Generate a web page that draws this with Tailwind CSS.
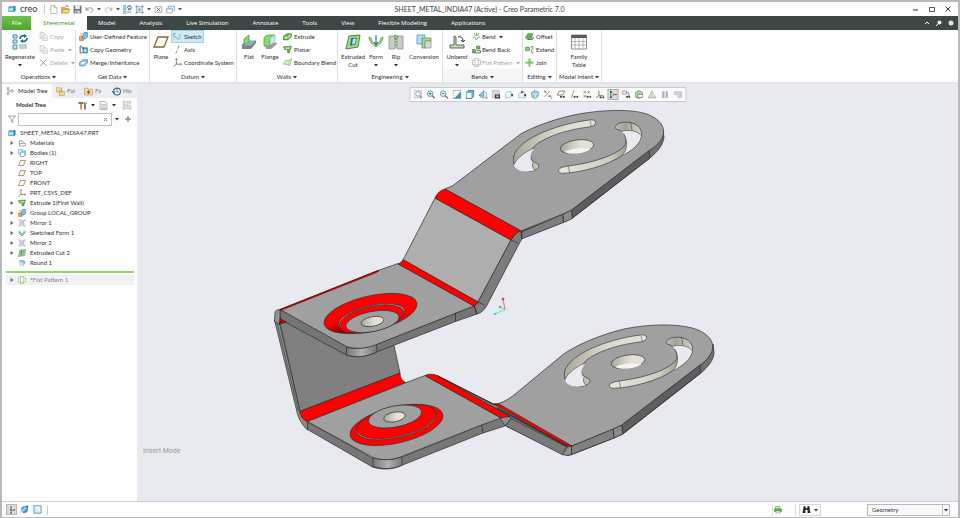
<!DOCTYPE html>
<html lang="en">
<head>
    <meta charset="UTF-8">
    <meta name="viewport" content="width=device-width, initial-scale=1.0">
    <title>SHEET_METAL_INDIA47 (Active) - Creo Parametric 7.0</title>
    <script src="https://cdn.jsdelivr.net/npm/@tailwindcss/browser@4"></script>
</head>
<body class="h-screen flex flex-col overflow-hidden bg-[#fdfdfd] border-2 border-b border-[#b9b9bb] font-['Lato','Open_Sans',sans-serif] text-[6px] leading-[8px] text-[#333]">

    <!-- Icon sprites -->
    <svg class="absolute size-0" xmlns="http://www.w3.org/2000/svg">
        <symbol id="i-cube" viewBox="0 0 16 16"><path d="M1 5 4 2h11v9l-3 3H1z" fill="#1d86a8"/><path d="M2 5.500h9V13H2z" fill="#9fe0f5"/><path d="M3 4.500 5 3h8l-2 1.500z" fill="#c9f0fb"/></symbol>
        <symbol id="i-new" viewBox="0 0 16 16"><path d="M3 1h7l4 4v10H3z" fill="#fff" stroke="#8b9197"/><path d="M10 1v4h4" fill="none" stroke="#8b9197"/></symbol>
        <symbol id="i-open" viewBox="0 0 16 16"><path d="M1 4h5l1 2h6v8H1z" fill="#e8b54a" stroke="#a97c22"/><path d="M4 8h12l-3 6H1z" fill="#fbdc8d" stroke="#a97c22"/><path d="M8 3c2-2 4-2 5 0" fill="none" stroke="#444" stroke-width="1.500"/></symbol>
        <symbol id="i-save" viewBox="0 0 16 16"><path d="M1 1h14v14H1z" fill="#6f7780"/><path d="M4 1h8v6H4z" fill="#f3f5f6"/><path d="M4 10h8v5H4z" fill="#dfe3e6"/><path d="M6 11h2v3H6z" fill="#555"/></symbol>
        <symbol id="i-undo" viewBox="0 0 16 16"><path d="M2 9c3-5 10-5 12-1 0 2-1 4-4 5M2 4v5h5" fill="none" stroke="#80868c" stroke-width="1.600"/></symbol>
        <symbol id="i-redo" viewBox="0 0 16 16"><path d="M14 9C11 4 4 4 2 8c0 2 1 4 4 5M14 4v5H9" fill="none" stroke="#a3a8ad" stroke-width="1.600"/></symbol>
        <symbol id="i-regen" viewBox="0 0 16 16"><path d="M1 1h4v3H1zM1 6h4v3H1zM1 11h4v4H1z" fill="#cdeaf6" stroke="#3b8fb5"/><path d="M7 10h8v5H7z" fill="#c9cdd1"/><path d="M8 5c0-3 3-4 5-3M15 4c0 3-3 4-5 3" fill="none" stroke="#1d6b8c" stroke-width="1.800"/><path d="m12 0 3 2-3 2zM11 5l-3 2 3 2z" fill="#1d6b8c"/></symbol>
        <symbol id="i-windows" viewBox="0 0 16 16"><path d="M4 2h11v8H4z" fill="#e9f6fb" stroke="#3b8fb5"/><path d="M1 6h10v8H1z" fill="#fff" stroke="#6f7780"/><path d="M1 6h10v2H1z" fill="#8ccbe3"/></symbol>
        <symbol id="i-gear" viewBox="0 0 16 16"><path d="M3 3h10v10H3z" fill="#e5f3f8" stroke="#6b7d86"/><path d="M6 6h4v4H6zM1 1h3v3H1zM12 1h3v3h-3zM1 12h3v3H1zM12 12h3v3h-3z" fill="#5f9cb3"/></symbol>
        <symbol id="i-close" viewBox="0 0 16 16"><path d="M2 3h12v10H2z" fill="#fff" stroke="#777"/><path d="m5 5 6 6M11 5l-6 6" stroke="#666" stroke-width="1.500"/></symbol>
        <symbol id="i-copy" viewBox="0 0 16 16"><path d="M2 1h6l2 2v8H2z" fill="#f4f4f4" stroke="#b0b3b6"/><path d="M7 5h5l3 3v7H7z" fill="#fafafa" stroke="#b0b3b6"/><path d="M8 10h5M8 12h5" stroke="#c5c7c9"/></symbol>
        <symbol id="i-delete" viewBox="0 0 16 16"><path d="m2 3 12 11M14 2 2 14" stroke="#8f9397" stroke-width="1.600"/></symbol>
        <symbol id="i-udf" viewBox="0 0 16 16"><path d="M1 8h7v7H1z" fill="#e9a75c" stroke="#a8692b"/><path d="M6 4 9 1h6v8l-3 3H6z" fill="#7fbbe6" stroke="#356f9e"/><path d="M2 2h5v4H2z" fill="#f6cf86"/></symbol>
        <symbol id="i-copygeo" viewBox="0 0 16 16"><path d="M2 2v12M2 14h4M2 2h3" stroke="#444" stroke-width="1.500" fill="none"/><path d="M7 5h8v9H7z" fill="#54a9d8" stroke="#205f87"/><path d="m4 5 4-2v4z" fill="#35741f"/><path d="M9 8h4v4H9z" fill="#d7effa"/></symbol>
        <symbol id="i-merge" viewBox="0 0 16 16"><path d="M1 8 7 3h8v6l-6 5H1z" fill="#8ccbe9" stroke="#2f7095"/><path d="M5 7h7l-4 4H3z" fill="#fff"/></symbol>
        <symbol id="i-plane" viewBox="0 0 16 16"><path d="M5 3h10l-4 10H1z" fill="#fdfaf0" stroke="#80693c" stroke-width="1.300"/></symbol>
        <symbol id="i-sketch" viewBox="0 0 16 16"><path d="M1 3h4M1 3v4M1 11c3-7 5 0 7 1s4 0 4-2" fill="none" stroke="#3aa0bf" stroke-width="1.300"/><path d="M9 6h6M12 3v6" stroke="#6bbcd3"/></symbol>
        <symbol id="i-axis" viewBox="0 0 16 16"><path d="M11 1 9 6M8 8l-.5 1.500M6.500 11 5 15" stroke="#80693c" stroke-width="1.500"/></symbol>
        <symbol id="i-csys" viewBox="0 0 16 16"><path d="M6 1v10h9M6 11l-5 4M4 3l2-2 2 2M13 9l2 2-2 2" fill="none" stroke="#80693c" stroke-width="1.400"/></symbol>
        <symbol id="i-flat" viewBox="0 0 16 16"><path d="m1 11 5-4h9l-5 5H1z" fill="#a9acae" stroke="#6a6e70" stroke-width=".7"/><path d="M1 12h9l5-5v2l-5 6H1z" fill="#7e8284"/><path d="m3 5 5-4v6l-5 4z" fill="#8fd86e" stroke="#4b9632" stroke-width=".8"/><path d="M8 7h5l-4 3H4z" fill="#5bc0de"/></symbol>
        <symbol id="i-flange" viewBox="0 0 16 16"><path d="M2 5c0-3 3-4 6-4h5L8 6v6H2z" fill="#8fd86e" stroke="#5c9d48" stroke-width=".8"/><path d="M8 6c0-2 2-4 5-5v6l-5 5z" fill="#bfe9f5" stroke="#78a7b4" stroke-width=".6"/><path d="m3 12 5-1 6-3 1 2-6 5H4z" fill="#999d9f"/></symbol>
        <symbol id="i-extrude" viewBox="0 0 16 16"><path d="m1 7 6-4h8v5l-6 6H1z" fill="#62b947" stroke="#2d7c24"/><path d="M3 8h5v4H3zM9 7l4-3v3l-4 4z" fill="#c8efb9"/></symbol>
        <symbol id="i-planar" viewBox="0 0 16 16"><path d="m1 3 14-1-4 12-3-1V8H3z" fill="#62b947" stroke="#2d7c24"/><path d="m4 5 8-1-1 3H5z" fill="#c8efb9"/></symbol>
        <symbol id="i-blend" viewBox="0 0 16 16"><path d="M1 11C2 5 5 4 8 4s5-1 7-3c-1 6-1 9-4 13-3-3-6-3-10-3z" fill="#eaf7e4" stroke="#64a850"/><path d="M5 12c0-4 1-6 3-8M11 13c-1-4 0-7 1-9" fill="none" stroke="#64a850"/></symbol>
        <symbol id="i-cut" viewBox="0 0 16 16"><path d="m4 2 11-1-2 12-12 2z" fill="#a5dc8d" stroke="#448b33"/><path d="m6 4 6-.5-1.500 7L5 12z" fill="#2c7386"/><path d="m8 5 3-.5-1 5-3 1z" fill="#c3e9f2"/></symbol>
        <symbol id="i-form" viewBox="0 0 16 16"><path d="M1 3c1 6 3 7 7 10 4-3 6-4 7-10l-2 1c-1 4-3 5-5 6-2-1-4-2-5-6z" fill="#a5e08b" stroke="#52883f" stroke-width=".7"/><path d="M8 1v9M6 8l2 3 2-3" fill="none" stroke="#357bb0" stroke-width="1.200"/></symbol>
        <symbol id="i-rip" viewBox="0 0 16 16"><path d="M1 2h6v13H1zM9 2h6v13H9z" fill="#c9cdca" stroke="#83898a" stroke-width=".7"/><path d="M8 5c-1 0-2-4 0-4s1 4 0 4v9" fill="none" stroke="#48a72f" stroke-width="1.500" stroke-dasharray="2 1"/></symbol>
        <symbol id="i-conv" viewBox="0 0 16 16"><path d="M1 1h8v9H1z" fill="#a9e2f3" stroke="#4294b0" stroke-width=".7"/><path d="M6 4h9v3H9v7H6z" fill="#a5dc8d" stroke="#448b33" stroke-width=".7"/><path d="M9 7h6v7H9z" fill="#d4d7d9" stroke="#8a8e91" stroke-width=".7"/></symbol>
        <symbol id="i-unbend" viewBox="0 0 16 16"><path d="M1 11h4V2l2 1v8h8v3H1z" fill="#b9dfaa" stroke="#55595c" stroke-width=".9"/><path d="M9 3c3-1 5 1 5 4M12 6l2 2 2-2" fill="none" stroke="#333"/></symbol>
        <symbol id="i-bend" viewBox="0 0 16 16"><path d="M1 9h4l3 5 3-5h4M8 1v6M4 2l2 5M12 2l-2 5" fill="none" stroke="#6e8b68" stroke-width="1.400"/></symbol>
        <symbol id="i-bendback" viewBox="0 0 16 16"><path d="M1 8h5v6H1zM8 2h6v5H8z" fill="#6aba53" stroke="#2d6a22"/><path d="M6 14h9v-4H8" fill="none" stroke="#444" stroke-width="1.400"/></symbol>
        <symbol id="i-flatpat" viewBox="0 0 16 16"><path d="M5 1h6v3h4v8h-4v3H5v-3H1V4h4z" fill="#fff" stroke="currentColor" stroke-width="1.300"/><path d="M5 4v8h6V4" fill="none" stroke="currentColor"/></symbol>
        <symbol id="i-offset" viewBox="0 0 16 16"><path d="m1 10 4-7h9l-3 8H1z" fill="#62b947" stroke="#2d7c24"/><path d="M4 13h9l2-4" fill="none" stroke="#333" stroke-width="1.600"/></symbol>
        <symbol id="i-extend" viewBox="0 0 16 16"><path d="M1 4h7v6H1z" fill="#8fcf78" stroke="#3f6d33"/><path d="M10 3h4v5M12 8v6h3" fill="none" stroke="#4d8f3d" stroke-width="1.600"/></symbol>
        <symbol id="i-join" viewBox="0 0 16 16"><path d="M6 1h4v5h5v4h-5v5H6v-5H1V6h5z" fill="#72c15a" stroke="#d5ecd0"/></symbol>
        <symbol id="i-table" viewBox="0 0 16 16"><path d="M.5 1h15v14H.5z" fill="#fff" stroke="#777" stroke-width=".8"/><path d="M.5 1h15v3H.5z" fill="#555b60"/><path d="M.5 7.500h15M.5 11h15M4 4v11M8 4v11M12 4v11" stroke="#9a9ea1" stroke-width=".7"/></symbol>
        <symbol id="i-treetab" viewBox="0 0 16 16"><path d="M4 3v10M4 8h7" stroke="#666"/><circle cx="4" cy="3" r="2" fill="#fff" stroke="#555"/><circle cx="4" cy="13" r="2" fill="#fff" stroke="#555"/><circle cx="12" cy="8" r="2.500" fill="#fff" stroke="#555"/></symbol>
        <symbol id="i-folders" viewBox="0 0 16 16"><path d="M1 1h4l1 1h4v7H1zM6 6h4l1 2h4v7H6z" fill="#f8dd99" stroke="#b98a32"/></symbol>
        <symbol id="i-fav" viewBox="0 0 16 16"><path d="M1 2h5l1 2h8v10H1z" fill="#f8dd99" stroke="#b98a32"/><path d="M8 6v6M5 9h6" stroke="#2e6d93" stroke-width="2"/></symbol>
        <symbol id="i-history" viewBox="0 0 16 16"><circle cx="9" cy="8" r="6" fill="#fff" stroke="#2f6f93" stroke-width="2"/><path d="M9 4v5h3M0 7l3 4 3-4" fill="none" stroke="#1e4f6b" stroke-width="1.500"/></symbol>
        <symbol id="i-tools" viewBox="0 0 16 16"><path d="M1 2h8v3H1z" fill="#555"/><path d="M4 5h3v10H4z" fill="#c98433"/><path d="M11 6h3v9h-3z" fill="#666"/><path d="M10 1v4l2 2 3-2V1l-2 3z" fill="#777"/></symbol>
        <symbol id="i-doc" viewBox="0 0 16 16"><path d="M2 1h9l3 3v11H2z" fill="#fff" stroke="#777"/><path d="M4 6h8M4 8.500h8M4 11h8M4 13h8" stroke="#8b9197"/></symbol>
        <symbol id="i-treefilter" viewBox="0 0 16 16"><path d="M2 2h3v3H2zM2 7h3v3H2zM2 12h3v3H2zM8 2h6v3H8zM8 8h6v6H8z" fill="none" stroke="#a0a4a7"/><path d="m7 7 8 8" stroke="#a0a4a7"/></symbol>
        <symbol id="i-funnel" viewBox="0 0 16 16"><path d="M1 2h14L9.500 8.500V15l-3-2.500v-4z" fill="none" stroke="#5e6468" stroke-width="1.200"/></symbol>
        <symbol id="i-folder" viewBox="0 0 16 16"><path d="M3 13V3h4l1 3h5" fill="none" stroke="#777" stroke-width="1.200"/><path d="M3 14V9h12v5z" fill="#fff" stroke="#777" stroke-width="1.200"/></symbol>
        <symbol id="i-bodies" viewBox="0 0 16 16"><path d="M1 1h8v9H1z" fill="#dff3fa" stroke="#2f8cab"/><path d="m5 7 3-3h7v8l-3 3H5z" fill="#8fd3e8" stroke="#2f8cab"/><path d="M6 8h6v6H6z" fill="#fff"/></symbol>
        <symbol id="i-mirror" viewBox="0 0 16 16"><path d="M1 2h3l2 6-2 6H1M15 2h-3l-2 6 2 6h3" fill="#eeecf6" stroke="#8d84ad" stroke-width="1.200"/><path d="M8 1v14" stroke="#777"/></symbol>
        <symbol id="i-formtree" viewBox="0 0 16 16"><path d="m1 5 7 9 7-9" fill="none" stroke="#4c9f45" stroke-width="2"/><path d="M4 3c0 4 2 6 4 6s4-2 4-6" fill="none" stroke="#3a9bd0" stroke-width="1.500"/></symbol>
        <symbol id="i-round" viewBox="0 0 16 16"><path d="M3 2h7c3 0 5 2 5 5l-5 8V8H3z" fill="#7cc3d4"/><path d="M1 6h8v9H5z" fill="#d7dbdd"/></symbol>
        <symbol id="i-refit" viewBox="0 0 16 16"><path d="M1 1h13v13H1z" fill="#eef2f4" stroke="#9aa3a9"/><circle cx="8" cy="7" r="4" fill="#fff" stroke="#6e8a99" stroke-width="1.300"/><path d="m11 10 4 5" stroke="#6e8a99" stroke-width="1.800"/></symbol>
        <symbol id="i-zoomin" viewBox="0 0 16 16"><circle cx="6.500" cy="6.500" r="5" fill="#e5f6fb" stroke="#4183a0" stroke-width="1.400"/><path d="M4 6.500h5M6.500 4v5" stroke="#275f7c" stroke-width="1.400"/><path d="m10 10 5 5" stroke="#6b5a45" stroke-width="2"/></symbol>
        <symbol id="i-zoomout" viewBox="0 0 16 16"><circle cx="6.500" cy="6.500" r="5" fill="#e5f6fb" stroke="#4183a0" stroke-width="1.400"/><path d="M4 6.500h5" stroke="#275f7c" stroke-width="1.400"/><path d="m10 10 5 5" stroke="#6b5a45" stroke-width="2"/></symbol>
        <symbol id="i-repaint" viewBox="0 0 16 16"><path d="M1 1h14v14H1z" fill="#fff" stroke="#777"/><path d="M15 3v12H2C8 12 9 6 15 3z" fill="#4793b8"/></symbol>
        <symbol id="i-shade" viewBox="0 0 16 16"><path d="m1 5 4-4h10v10l-4 4H1z" fill="#69b6d4" stroke="#2f5f7c" stroke-width="1.300"/><path d="M2 5.500h8.500V14H2z" fill="#e8f7fc"/></symbol>
        <symbol id="i-saved" viewBox="0 0 16 16"><path d="m1 9 8-7v10z" fill="#8fd0e3" stroke="#2f6f93"/><path d="M9 2c5 1 7 7 3 11M1 9c2 4 6 6 10 5" fill="none" stroke="#3687a5" stroke-width="1.300"/><path d="M12 15h4v-4z" fill="#444"/></symbol>
        <symbol id="i-viewmgr" viewBox="0 0 16 16"><path d="M1 1h13v13H1z" fill="#d6d9db" stroke="#a8adb0"/><path d="M6 8h9v7H6z" fill="#333"/><circle cx="10.500" cy="11.500" r="2" fill="#ddd"/></symbol>
        <symbol id="i-box" viewBox="0 0 16 16"><path d="m2 6 3-3h7v8l-3 3H2z" fill="#e8f7fc" stroke="#68aabf"/><path d="M12 7h3v4h-3z" fill="#333"/></symbol>
        <symbol id="i-appear" viewBox="0 0 16 16"><path d="m2 7 5-4h4l3 4v7H2z" fill="#e8f7fc" stroke="#68aabf"/><path d="m7 1 4 3-4 2zM12 7h3v4h-3z" fill="#333"/></symbol>
        <symbol id="i-persp" viewBox="0 0 16 16"><path d="m1 5 7-4 7 3-2 8-5 3-5-2z" fill="#9ad2e5" stroke="#3a87a3"/><path d="m3 6 6 2v6M9 8l5-3" fill="none" stroke="#fff"/></symbol>
        <symbol id="i-datum" viewBox="0 0 16 16"><path d="m2 12 9-10M1 3h4M3 1v4M8 11h6M11 9v4" stroke="#80693c" stroke-width="1.400"/><path d="M13 15h3v-3z" fill="#333"/></symbol>
        <symbol id="i-dplane" viewBox="0 0 16 16"><path d="M5 2h10l-4 7H1z" fill="none" stroke="#80693c" stroke-width="1.400"/><circle cx="8" cy="12" r="2" fill="#444"/><circle cx="13" cy="12" r="2" fill="#444"/></symbol>
        <symbol id="i-daxis" viewBox="0 0 16 16"><path d="M8 1 3 15" stroke="#80693c" stroke-width="1.500" stroke-dasharray="5 1.500"/><circle cx="9" cy="12" r="2" fill="#444"/><circle cx="14" cy="12" r="2" fill="#444"/></symbol>
        <symbol id="i-dpoint" viewBox="0 0 16 16"><path d="m2 2 4 4M6 2 2 6M9 2l4 4M13 2 9 6M2 9l4 4M6 9l-4 4" stroke="#80693c" stroke-width="1.300"/><circle cx="9" cy="12" r="2" fill="#444"/><circle cx="14" cy="12" r="2" fill="#444"/></symbol>
        <symbol id="i-dcsys" viewBox="0 0 16 16"><path d="M6 1v9h8M6 10l-5 4" fill="none" stroke="#80693c" stroke-width="1.500"/><circle cx="9" cy="13" r="2" fill="#444"/><circle cx="14" cy="13" r="2" fill="#444"/></symbol>
        <symbol id="i-spin" viewBox="0 0 16 16"><path d="M4 2v12" stroke="#3f9a41" stroke-width="2"/><path d="m4 3 6 5" stroke="#3f9a41" stroke-width="1.500"/><path d="m4 13 6-5" stroke="#3a9bd0" stroke-width="1.500"/><path d="M9 8h6" stroke="#c33" stroke-width="2"/><circle cx="4" cy="3" r="1.500" fill="#333"/><circle cx="4" cy="13" r="1.500" fill="#333"/></symbol>
        <symbol id="i-annot" viewBox="0 0 16 16"><path d="M1 2h8v5H1zM9 5h4v6" fill="#fff" stroke="#666" stroke-width="1.200"/><circle cx="10" cy="12" r="2" fill="#444"/><circle cx="14" cy="12" r="2" fill="#444"/></symbol>
        <symbol id="i-sim" viewBox="0 0 16 16"><path d="m1 5 6-4 7 3v8l-6 3-6-2z" fill="#a5d796" stroke="#4c8c3f"/><path d="M6 8h9v5H6z" fill="#fff" stroke="#555"/></symbol>
        <symbol id="i-tri" viewBox="0 0 16 16"><path d="m8 2 7 12H1zM8 2v8l7 4M8 10l-7 4" fill="#e3e3e3" stroke="#a0a0a0"/></symbol>
        <symbol id="i-pause" viewBox="0 0 16 16"><path d="M3 2h4v12H3zM9 2h4v12H9z" fill="#b0b0b2"/></symbol>
        <symbol id="i-exit" viewBox="0 0 16 16"><path d="M1 3h14v10H8V8H1z" fill="#d2d2d4" stroke="#b5b5b7"/></symbol>
        <symbol id="i-navtree" viewBox="0 0 16 16"><path d="M6 2v12M6 8h6" stroke="#777" stroke-width="1.500"/><path d="M4 1h4v3H4zM4 6h4v4H4zM4 12h4v3H4zM11 6h3v4h-3z" fill="#777"/></symbol>
        <symbol id="i-browser" viewBox="0 0 16 16"><circle cx="8" cy="8" r="6" fill="#2b90cc"/><path d="M1 13C3 6 9 2 15 3c-3 0-5 8-10 9z" fill="#8fd0f0"/><path d="m10 2 5-1-2 5z" fill="#1d5c8c"/></symbol>
        <symbol id="i-panel" viewBox="0 0 16 16"><path d="M1.500 1.500h13v13h-13z" fill="#d4ecf6" stroke="#407f9f" stroke-width="1.300"/><path d="M3 3h9v9z" fill="#f6fcff"/></symbol>
        <symbol id="i-status" viewBox="0 0 16 16"><path d="M3 1h9v5H3z" fill="#c9efc0" stroke="#418d35"/><path d="M1 6h14v5H1z" fill="#62b947" stroke="#2d7c24"/><path d="M4 10h8v4H4z" fill="#fff" stroke="#418d35"/></symbol>
        <symbol id="i-find" viewBox="0 0 16 16"><path d="M3 2h3l1 4h2l1-4h3l2 12h-5V9H6v5H1z" fill="#222"/><path d="M3 10h2M11 10h2" stroke="#999"/></symbol>
        <symbol id="i-down" viewBox="0 0 8 8"><path d="M0 2h8L4 7z" fill="currentColor"/></symbol>
        <symbol id="i-right" viewBox="0 0 8 8"><path d="M1 0v8l6-4z" fill="#666"/></symbol>

        <!-- Slots and centre hole shared by both arms -->
        <linearGradient id="wall" x1="0" y1="0" x2="1" y2="0"><stop offset="0" stop-color="#a9a899"/><stop offset=".5" stop-color="#dad8ca"/><stop offset="1" stop-color="#e6e4d8"/></linearGradient>
        <linearGradient id="wall2" x1="0" y1="0" x2="1" y2="0"><stop offset="0" stop-color="#eae8dc"/><stop offset=".6" stop-color="#cfcdbf"/><stop offset=".8" stop-color="#a3a295"/><stop offset="1" stop-color="#d8d6c8"/></linearGradient>
        <linearGradient id="hole" x1="0" y1="0" x2="1" y2="0"><stop offset="0" stop-color="#a9a899"/><stop offset=".6" stop-color="#e4e2d6"/></linearGradient>
        <linearGradient id="side" x1="0" y1="0" x2="1" y2="0"><stop offset="0" stop-color="#787878"/><stop offset=".5" stop-color="#b0b0b0"/><stop offset="1" stop-color="#777"/></linearGradient>
        <radialGradient id="dish" cx=".18" cy=".8" r=".3"><stop offset="0" stop-color="#8c0000"/><stop offset="1" stop-color="#f00"/></radialGradient>
        <symbol id="slots" viewBox="0 0 750 450">
            <g stroke="#333" stroke-width="2" stroke-linejoin="round">
                <path d="M478 60C380 72 245 122 250 182c2 26 28 34 50 32 24-2 30-14 25-21-8-6-20-6-23-22-3-22 10-34 28-45 40-24 90-38 153-46 20-6 19-24-5-20z" fill="url(#wall)"/>
                <path d="M252 196c6-20 34-42 64-53-16 14-18 32-9 47-4 6 0 14 6 21-26 9-55 3-61-15z" fill="#e8eaef" stroke="none"/>
                <path d="m480 62 4 18M252 194c8-20 34-40 64-51M307 190c0 8 2 14 8 20" fill="none" stroke-width="1.500"/>
                <path d="M415 198c-34 4-36 18-20 22 56-1 140-24 180-53 30-13 60-38 60-66-2-28-34-39-62-33-18 5-22 17-12 20 20 5 29 22 27 40-8 28-80 58-173 70z" fill="url(#wall2)"/>
                <path d="M574 94c10-3 22-3 31-2 12 3 22 8 28 14-2 24-26 44-56 60 16-16 17-42 7-60z" fill="#e8eaef" stroke="none"/>
                <path d="M574 94c12-4 44-6 59 12M577 166c18-20 14-48 4-64M602 67l4 24M415 199l4 19" fill="none" stroke-width="1.500"/>
                <ellipse cx="441" cy="140" rx="51" ry="20" transform="rotate(-8 441 140)" fill="url(#hole)"/>
                <path d="M402 156c20-12 50-14 80-9-14 13-56 20-80 9z" fill="#f4f4f2" stroke="none"/>
            </g>
        </symbol>
    </svg>

    <!-- Title bar -->
    <header class="h-3.5 shrink-0 flex items-center px-1.5">
        <div class="flex-1 flex items-center">
            <svg class="size-2"><use href="#i-cube"/></svg>
            <span class="ml-1 w-5 text-[9px] leading-[10px] text-[#333]">creo</span>
            <span class="ml-1 h-2.5 w-px bg-[#ccc]"></span>
            <div class="flex items-center gap-[3px] ml-1 text-[#555]">
                <button aria-label="New"><svg class="size-[9px]"><use href="#i-new"/></svg></button>
                <button aria-label="Open"><svg class="size-[9px]"><use href="#i-open"/></svg></button>
                <button aria-label="Save"><svg class="size-[9px]"><use href="#i-save"/></svg></button>
                <button aria-label="Undo"><svg class="size-[9px]"><use href="#i-undo"/></svg></button>
                <button aria-label="Undo list"><svg class="size-1"><use href="#i-down"/></svg></button>
                <button aria-label="Redo"><svg class="size-[9px]"><use href="#i-redo"/></svg></button>
                <button aria-label="Redo list"><svg class="size-1"><use href="#i-down"/></svg></button>
                <button aria-label="Regenerate"><svg class="size-[9px]"><use href="#i-regen"/></svg></button>
                <button aria-label="Settings"><svg class="size-[9px]"><use href="#i-gear"/></svg></button>
                <button aria-label="Settings list"><svg class="size-1"><use href="#i-down"/></svg></button>
                <button aria-label="Close window"><svg class="size-[9px]"><use href="#i-close"/></svg></button>
                <button aria-label="Windows"><svg class="size-[9px]"><use href="#i-windows"/></svg></button>
                <button aria-label="Customize"><svg class="size-1"><use href="#i-down"/></svg></button>
            </div>
        </div>
        <h1 class="text-[7px] whitespace-nowrap text-[#444]">SHEET_METAL_INDIA47 (Active) - Creo Parametric 7.0</h1>
        <div class="flex-1 flex justify-end items-center gap-2.5 pr-px">
            <button aria-label="Minimize"><svg class="size-1.5" viewBox="0 0 6 6"><path d="M0 4h5" stroke="#333"/></svg></button>
            <button aria-label="Restore"><svg class="size-1.5" viewBox="0 0 6 6"><path d="M.5 1.500h5v4h-5z" fill="none" stroke="#555"/></svg></button>
            <button aria-label="Close"><svg class="size-1.5" viewBox="0 0 6 6"><path d="m.5.5 5 5m0-5-5 5" stroke="#333"/></svg></button>
        </div>
    </header>

    <!-- Ribbon tabs -->
    <nav class="h-3.5 shrink-0 flex items-stretch bg-[#3c4746] text-white font-['Open_Sans']">
        <button class="w-[29px] bg-linear-to-b from-[#6cc24a] to-[#4ea42f]">File</button>
        <button class="w-14 bg-[#fdfdfd] text-[#3f8f22]">Sheetmetal</button>
        <div class="flex-1 flex items-center gap-6 px-[11px] whitespace-nowrap">
            <button>Model</button>
            <button>Analysis</button>
            <button>Live Simulation</button>
            <button>Annotate</button>
            <button>Tools</button>
            <button>View</button>
            <button>Flexible Modeling</button>
            <button>Applications</button>
        </div>
        <div class="flex items-center gap-1.5 pr-1">
            <button aria-label="Collapse ribbon"><svg class="size-1.5" viewBox="0 0 6 6"><path d="m1 4 2-2 2 2" fill="none" stroke="#fff"/></svg></button>
            <button aria-label="Search"><svg class="size-1.5" viewBox="0 0 6 6"><circle cx="3.500" cy="2.500" r="2" fill="#fff"/><path d="M0 6l2-2" stroke="#fff"/></svg></button>
            <button aria-label="Learn"><svg class="size-1.5" viewBox="0 0 6 6"><circle cx="3" cy="3" r="2.500" fill="#dfe3e3"/></svg></button>
        </div>
    </nav>

    <!-- Ribbon -->
    <section class="h-[54px] shrink-0 flex border-b-2 border-[#e4e6e9] whitespace-nowrap">
        <div class="w-[74px] flex flex-col border-r border-[#dcdee0]">
            <div class="flex h-[39px] pl-[3px] gap-1">
                <button class="w-[30px] flex flex-col items-center"><span class="h-[23px] shrink-0 flex items-center"><svg class="size-4"><use href="#i-regen"/></svg></span>Regenerate<svg class="size-1 mt-0.5"><use href="#i-down"/></svg></button>
                <div class="grid grid-rows-3 text-[#aaa]">
                    <button class="flex items-center gap-0.5"><svg class="size-[9px]"><use href="#i-copy"/></svg>Copy</button>
                    <button class="flex items-center gap-0.5"><svg class="size-[9px]"><use href="#i-copy"/></svg>Paste<svg class="size-1 ml-0.5"><use href="#i-down"/></svg></button>
                    <button class="flex items-center gap-0.5"><svg class="size-[9px]"><use href="#i-delete"/></svg>Delete<svg class="size-1 ml-0.5"><use href="#i-down"/></svg></button>
                </div>
            </div>
            <button class="flex-1 flex items-center justify-center gap-0.5 pt-0.5">Operations<svg class="size-1"><use href="#i-down"/></svg></button>
        </div>
        <div class="w-[74px] flex flex-col border-r border-[#dcdee0]">
            <div class="grid grid-rows-3 justify-start h-[39px] pl-[3px]">
                <button class="flex items-center gap-0.5"><svg class="size-[9px]"><use href="#i-udf"/></svg>User-Defined Feature</button>
                <button class="flex items-center gap-0.5"><svg class="size-[9px]"><use href="#i-copygeo"/></svg>Copy Geometry</button>
                <button class="flex items-center gap-0.5"><svg class="size-[9px]"><use href="#i-merge"/></svg>Merge/Inheritance</button>
            </div>
            <button class="flex-1 flex items-center justify-center gap-0.5 pt-0.5">Get Data<svg class="size-1"><use href="#i-down"/></svg></button>
        </div>
        <div class="w-[87px] flex flex-col border-r border-[#dcdee0]">
            <div class="flex h-[39px] pl-0.5 gap-px">
                <button class="w-[18px] flex flex-col items-center"><span class="h-[23px] shrink-0 flex items-center"><svg class="size-4"><use href="#i-plane"/></svg></span>Plane</button>
                <div class="grid grid-rows-3 justify-items-start">
                    <button class="flex items-center gap-0.5 px-0.5 bg-[#cdeaf5] outline outline-[#9fd3e6] -outline-offset-1"><svg class="size-[9px]"><use href="#i-sketch"/></svg>Sketch</button>
                    <button class="flex items-center gap-0.5 px-0.5"><svg class="size-[9px]"><use href="#i-axis"/></svg>Axis</button>
                    <button class="flex items-center gap-0.5 px-0.5"><svg class="size-[9px]"><use href="#i-csys"/></svg>Coordinate System</button>
                </div>
            </div>
            <button class="flex-1 flex items-center justify-center gap-0.5 pt-0.5">Datum<svg class="size-1"><use href="#i-down"/></svg></button>
        </div>
        <div class="w-[101px] flex flex-col border-r border-[#dcdee0]">
            <div class="flex h-[39px] pl-0.5 gap-px">
                <button class="w-5 flex flex-col items-center"><span class="h-[23px] shrink-0 flex items-center"><svg class="size-4"><use href="#i-flat"/></svg></span>Flat</button>
                <button class="w-5 flex flex-col items-center"><span class="h-[23px] shrink-0 flex items-center"><svg class="size-4"><use href="#i-flange"/></svg></span>Flange</button>
                <div class="grid grid-rows-3 pl-0.5">
                    <button class="flex items-center gap-0.5"><svg class="size-[9px]"><use href="#i-extrude"/></svg>Extrude</button>
                    <button class="flex items-center gap-0.5"><svg class="size-[9px]"><use href="#i-planar"/></svg>Planar</button>
                    <button class="flex items-center gap-0.5"><svg class="size-[9px]"><use href="#i-blend"/></svg>Boundary Blend</button>
                </div>
            </div>
            <button class="flex-1 flex items-center justify-center gap-0.5 pt-0.5">Walls<svg class="size-1"><use href="#i-down"/></svg></button>
        </div>
        <div class="w-[105px] flex flex-col border-r border-[#dcdee0]">
            <div class="flex h-[39px] pl-0.5">
                <button class="w-[26px] flex flex-col items-center"><span class="h-[23px] shrink-0 flex items-center"><svg class="size-4"><use href="#i-cut"/></svg></span>Extruded<br>Cut</button>
                <button class="w-5 flex flex-col items-center"><span class="h-[23px] shrink-0 flex items-center"><svg class="size-4"><use href="#i-form"/></svg></span>Form<svg class="size-1 mt-0.5"><use href="#i-down"/></svg></button>
                <button class="w-5 flex flex-col items-center"><span class="h-[23px] shrink-0 flex items-center"><svg class="size-4"><use href="#i-rip"/></svg></span>Rip<svg class="size-1 mt-0.5"><use href="#i-down"/></svg></button>
                <button class="flex-1 flex flex-col items-center"><span class="h-[23px] shrink-0 flex items-center"><svg class="size-4"><use href="#i-conv"/></svg></span>Conversion</button>
            </div>
            <button class="flex-1 flex items-center justify-center gap-0.5 pt-0.5">Engineering<svg class="size-1"><use href="#i-down"/></svg></button>
        </div>
        <div class="w-20 flex flex-col border-r border-[#dcdee0]">
            <div class="flex h-[39px] pl-0.5 gap-[3px]">
                <button class="w-6 flex flex-col items-center"><span class="h-[23px] shrink-0 flex items-center"><svg class="size-4"><use href="#i-unbend"/></svg></span>Unbend<svg class="size-1 mt-0.5"><use href="#i-down"/></svg></button>
                <div class="grid grid-rows-3">
                    <button class="flex items-center gap-px"><svg class="size-[9px]"><use href="#i-bend"/></svg>Bend<svg class="size-1 ml-0.5"><use href="#i-down"/></svg></button>
                    <button class="flex items-center gap-px"><svg class="size-[9px]"><use href="#i-bendback"/></svg>Bend Back</button>
                    <button class="flex items-center gap-px text-[#aaa]"><svg class="size-[9px]"><use href="#i-flatpat"/></svg>Flat Pattern<svg class="size-1 ml-0.5"><use href="#i-down"/></svg></button>
                </div>
            </div>
            <button class="flex-1 flex items-center justify-center gap-0.5 pt-0.5 bg-[#f5f6f7]">Bends<svg class="size-1"><use href="#i-down"/></svg></button>
        </div>
        <div class="w-[34px] flex flex-col border-r border-[#dcdee0]">
            <div class="grid grid-rows-3 justify-start h-[39px] pl-0.5">
                <button class="flex items-center gap-0.5"><svg class="size-[9px]"><use href="#i-offset"/></svg>Offset</button>
                <button class="flex items-center gap-0.5"><svg class="size-[9px]"><use href="#i-extend"/></svg>Extend</button>
                <button class="flex items-center gap-0.5"><svg class="size-[9px]"><use href="#i-join"/></svg>Join</button>
            </div>
            <button class="flex-1 flex items-center justify-center gap-0.5 pt-0.5">Editing<svg class="size-1"><use href="#i-down"/></svg></button>
        </div>
        <div class="w-[45px] flex flex-col border-r border-[#dcdee0]">
            <button class="h-[39px] flex flex-col items-center"><span class="h-[23px] shrink-0 flex items-center"><svg class="size-4"><use href="#i-table"/></svg></span>Family<br>Table</button>
            <button class="flex-1 flex items-center justify-center gap-0.5 pt-0.5">Model Intent<svg class="size-1"><use href="#i-down"/></svg></button>
        </div>
    </section>

    <main class="flex-1 min-h-0 flex">
        <!-- Navigator -->
        <aside class="w-[135px] shrink-0 flex flex-col bg-[#fdfdfd]">
            <div class="h-3.5 flex bg-[#eceef1] text-[#777]">
                <button class="w-[50px] flex items-center gap-1 pl-1 whitespace-nowrap bg-[#fdfdfd] text-[#333]"><svg class="size-2"><use href="#i-treetab"/></svg>Model Tree</button>
                <button class="w-7 flex items-center gap-0.5 pl-1"><svg class="size-[9px]"><use href="#i-folders"/></svg>Fol</button>
                <button class="w-7 flex items-center gap-0.5 pl-1"><svg class="size-[9px]"><use href="#i-fav"/></svg>Fa</button>
                <button class="w-7 flex items-center gap-0.5 pl-1"><svg class="size-[9px]"><use href="#i-history"/></svg>His</button>
            </div>
            <div class="h-3.5 flex items-center pl-3.5 pr-[5px] text-[#333]">
                <h2 class="flex-1 font-bold">Model Tree</h2>
                <button class="flex items-center gap-1" aria-label="Settings"><svg class="size-[9px]"><use href="#i-tools"/></svg><svg class="size-1"><use href="#i-down"/></svg></button>
                <button class="flex items-center gap-1 ml-1" aria-label="Show"><svg class="size-[9px]"><use href="#i-doc"/></svg><svg class="size-1"><use href="#i-down"/></svg></button>
                <button class="ml-1.5" aria-label="Tree filters"><svg class="size-[10px]"><use href="#i-treefilter"/></svg></button>
            </div>
            <div class="h-3.5 flex items-center pl-1.5 pr-1">
                <label for="treeSearch" aria-label="Filter tree"><svg class="size-2 mr-0.5"><use href="#i-funnel"/></svg></label>
                <div class="relative flex-1">
                    <input id="treeSearch" type="text" class="block w-full h-[13px] border border-[#bfc3c6] bg-white px-1">
                    <button class="absolute right-1 top-1" aria-label="Clear"><svg class="size-[5px]" viewBox="0 0 6 6"><path d="m1 1 4 4m0-4-4 4" stroke="#777"/></svg></button>
                </div>
                <button class="ml-[3px]" aria-label="Search options"><svg class="size-1"><use href="#i-down"/></svg></button>
                <button class="ml-1.5 mr-0.5" aria-label="Add"><svg class="size-1.5" viewBox="0 0 6 6"><path d="M3 0v6M0 3h6" stroke="#666"/></svg></button>
            </div>
            <ul class="pt-0.5 leading-[10px]">
                <li class="flex items-center h-2.5 gap-1 pl-1.5"><svg class="size-2"><use href="#i-cube"/></svg>SHEET_METAL_INDIA47.PRT</li>
                <li class="flex items-center h-2.5 gap-1 pl-2"><svg class="size-1"><use href="#i-right"/></svg><svg class="size-2"><use href="#i-folder"/></svg>Materials</li>
                <li class="flex items-center h-2.5 gap-1 pl-2"><svg class="size-1"><use href="#i-right"/></svg><svg class="size-2"><use href="#i-bodies"/></svg>Bodies (1)</li>
                <li class="flex items-center h-2.5 gap-1 pl-4"><svg class="size-2"><use href="#i-plane"/></svg>RIGHT</li>
                <li class="flex items-center h-2.5 gap-1 pl-4"><svg class="size-2"><use href="#i-plane"/></svg>TOP</li>
                <li class="flex items-center h-2.5 gap-1 pl-4"><svg class="size-2"><use href="#i-plane"/></svg>FRONT</li>
                <li class="flex items-center h-2.5 gap-1 pl-4"><svg class="size-2"><use href="#i-csys"/></svg>PRT_CSYS_DEF</li>
                <li class="flex items-center h-2.5 gap-1 pl-2"><svg class="size-1"><use href="#i-right"/></svg><svg class="size-2"><use href="#i-planar"/></svg>Extrude 1(First Wall)</li>
                <li class="flex items-center h-2.5 gap-1 pl-2"><svg class="size-1"><use href="#i-right"/></svg><svg class="size-2"><use href="#i-udf"/></svg>Group LOCAL_GROUP</li>
                <li class="flex items-center h-2.5 gap-1 pl-2"><svg class="size-1"><use href="#i-right"/></svg><svg class="size-2"><use href="#i-mirror"/></svg>Mirror 1</li>
                <li class="flex items-center h-2.5 gap-1 pl-2"><svg class="size-1"><use href="#i-right"/></svg><svg class="size-2"><use href="#i-formtree"/></svg>Sketched Form 1</li>
                <li class="flex items-center h-2.5 gap-1 pl-2"><svg class="size-1"><use href="#i-right"/></svg><svg class="size-2"><use href="#i-mirror"/></svg>Mirror 2</li>
                <li class="flex items-center h-2.5 gap-1 pl-2"><svg class="size-1"><use href="#i-right"/></svg><svg class="size-2"><use href="#i-cut"/></svg>Extruded Cut 2</li>
                <li class="flex items-center h-2.5 gap-1 pl-4"><svg class="size-2"><use href="#i-round"/></svg>Round 1</li>
                <li class="mt-[3px] mb-0.5 ml-1 mr-[3px] h-0.5 bg-[#8bd873]"></li>
                <li class="flex items-center h-2.5 gap-1 ml-1 mr-[3px] pl-1 bg-[#f0f1f2] text-[#888]"><svg class="size-1"><use href="#i-right"/></svg><svg class="size-2 text-[#7fb56c]"><use href="#i-flatpat"/></svg><span><span class="text-[#222]">*</span>Flat Pattern 1</span></li>
            </ul>
        </aside>

        <!-- Graphics area -->
        <section class="relative flex-1 min-w-0 bg-[#e8eaef]">
            <svg class="block w-full h-full" viewBox="137 84 821 417" preserveAspectRatio="xMidYMid slice">
                <g stroke="#2b2b2b" stroke-width=".7" stroke-linejoin="round">
                    <!-- upper arm -->
                    <path d="M649 150C656 145 662 139 663 130l1 7c-1 9-7 15-14 21l-77.500 60-9 4-42 16-5 5-5-3 10-9 42.500-16 8-5z" fill="#707070"/>
                    <path d="M571.500 210l1 8 77.500-60-1-8z" fill="#5e5e5e"/>
                    <path d="M521.500 232v7l42-16.500-.5-8.500z" fill="#7d7d7d"/>
                    <path d="M563 214l.5 8.500 9-4-1-8.500z" fill="#8a8a8a"/>
                    <path d="M445 189c3-2 5-1.500 8-3.500l67-51C532 127 560 117 582 113.500c30-5 60-4 71 3.500 11 6 13 15 8 23-3 4-6 7-12 10.500L571.500 210l-8.500 4-42 17z" fill="#a0a0a0"/>
                    <!-- slanted web -->
                    <path d="M435 198 403 260l75 42 33-62z" fill="#aeaeae"/>
                    <path d="M511 240 478 302c-1 2-2 3-4 4l3 8c4-1 7-4 9-7l33-63c1-2 2-4 3-5v-7l-2-1c-4 2-7 5-9 9z" fill="#7c7c7c"/>
                    <path d="M511 240l7 3M520.500 231l1.500 8M478 302l6.500 3" fill="none"/>
                    <path d="M445 189 520.500 230.500c-4 2-7 5-9.500 9.500L435 198c2-5 6-8 10-9z" fill="#f00"/>
                    <!-- back wall -->
                    <path d="M279 318 300 411.500 400 373l-7-32-60-30z" fill="#808080"/>
                    <path d="M274.500 320 296.500 410c1 6 5 15 11 20v-8c-4-2-6-6-7.500-10.500L279 321z" fill="#8c8c8c"/>
                    <path d="M276.500 321 298.500 411" fill="none" stroke-width=".5"/>
                    <path d="M299.500 411.500 400 373c0 4 2 8 5.500 9.500L307.500 422c-4-2-7-6-8-10.500z" fill="#f00"/>
                    <!-- upper base -->
                    <path d="M280 309.500v10L346.500 355c9 3 20 2 30-3l79-30.500L477 314l-3-8-97 38-20 3z" fill="#757575"/>
                    <path d="M346.500 347v8c9 3 20 2 30.500-3l-.5-8c-9 4-22 6-30 3z" fill="url(#side)"/>
                    <path d="M280 309.500 378 270.500l20-7 76 42.500-18 7-79.500 31.500c-9 4-21 5-30 2z" fill="#a0a0a0"/>
                    <path d="M280 309.500 378 270.500l.5 1L281.500 310z" fill="#d00000" stroke="#7c0000"/>
                    <path d="M280 309.500c-4 0-5.500 2-5 4l-.5 8 5 3 .5-5z" fill="#949494"/>
                    <path d="M280 318.500 286.500 322l-7 2z" fill="#c00000"/>
                    <path d="M455.500 313v8.500M474 306l3 8" fill="none"/>
                    <path d="M403 259.500 478 302c-1 2-2 3-4 4l-76-42c2-1 4-2 5-4.500z" fill="#f00"/>
                    <!-- lower right arm -->
                    <path d="M700 365c8-5 12-12 13-21l1 8c0 8-6 15-13 21l-78 61-9 4-42 16.500-4 1-5-2-56-27 2-9 60 30 4-2 42-16 8-4z" fill="#707070"/>
                    <path d="M621.500 425l1 9 78-61-.5-8z" fill="#5e5e5e"/>
                    <path d="M613 429l1 9 9-4-1.500-9z" fill="#8a8a8a"/>
                    <path d="M571.500 446v8.500l42.500-16.500-1-9z" fill="#808080"/>
                    <path d="M437 375.500 494 404l73 43-57-28z" fill="#777" stroke="none"/>
                    <path d="M511 418.500 567 447l-4 8-57-29-5-8z" fill="#7a7a7a"/>
                    <path d="M567 447l4.500-1v8.500l-4.500 1-4.500-1z" fill="#8f8f8f"/>
                    <path d="M494 404c6 0 12-3 20-9l46-38C572 347 596 336 624 329c30-6 60-5 74 1 14 6 18 16 12 25-2 4-6 7-10 10l-78.500 60-8.500 4-41.500 17z" fill="#a0a0a0"/>
                    <path d="M494 404h5l73 42h-6z" fill="#f00"/>
                    <!-- lower base -->
                    <path d="M307.500 421.500v8L372.500 467c9 3 20 3 30-2L483 433l22-7 6-8-10-1-99 40-30 1z" fill="#777"/>
                    <path d="M373 457.500v9c9 3 20 3 29.500-1.500l-1-8.500c-9 4-20 4-28.500 1z" fill="url(#side)"/>
                    <path d="M307.500 421.500 405 383l20-7.500 76 42.500-19.500 7-80 31.500c-9 4-20 4-28.500 1z" fill="#a0a0a0"/>
                    <path d="M481.500 425l1.500 8M501 418l4.500 8" fill="none"/>
                    <path d="M500 418c4-2 9-3 11 .5l-6 7.500z" fill="#8f8f8f"/>
                    <path d="M425 375.500c4-2 8-1.500 12 0l73 41c-3 0-6 1-9 1.500z" fill="#f00"/>
                    <path d="M437 375.500 494 404.500M497 408 567 446" fill="none" stroke-width="1.200"/>
                </g>
                <use href="#slots" x="430" y="100" width="250" height="150"/>
                <use href="#slots" x="481" y="315" width="250" height="150"/>

                <!-- upper dimple -->
                <g stroke="#333" stroke-width=".7">
                    <ellipse cx="370.500" cy="313.500" rx="47.500" ry="17.500" transform="rotate(-13 370.500 313.500)" fill="url(#dish)"/>
                    <ellipse cx="371.500" cy="318" rx="34" ry="12.500" transform="rotate(-13 371.500 318)" fill="#b5b5b5"/>
                    <ellipse cx="371.500" cy="319" rx="33" ry="12.500" transform="rotate(-13 371.500 319)" fill="#f00"/>
                    <ellipse cx="372.500" cy="321.500" rx="27" ry="10" transform="rotate(-11 372.500 321.500)" fill="#a0a0a0"/>
                    <ellipse cx="372.500" cy="321.500" rx="11.500" ry="4.800" transform="rotate(-11 372.500 321.500)" fill="url(#hole)"/>
                </g>
                <!-- lower dimple -->
                <g stroke="#333" stroke-width=".7">
                    <ellipse cx="396.500" cy="425" rx="47.500" ry="18" transform="rotate(-13 396.500 425)" fill="#f00"/>
                    <ellipse cx="396.500" cy="422.500" rx="41" ry="15" transform="rotate(-13 396.500 422.500)" fill="#c9c9c9"/>
                    <ellipse cx="396.500" cy="421.500" rx="40.500" ry="15" transform="rotate(-13 396.500 421.500)" fill="#f00"/>
                    <ellipse cx="395" cy="416.500" rx="27" ry="10.500" transform="rotate(-11 395 416.500)" fill="#a0a0a0"/>
                    <ellipse cx="394.500" cy="417" rx="11" ry="4.800" transform="rotate(-11 394.500 417)" fill="url(#hole)"/>
                </g>
                <!-- spin centre -->
                <path d="M505 309.500 503 299" stroke="#e44" stroke-width=".8"/>
                <path d="M505 309.500 495 314" stroke="#3dd" stroke-width=".8"/>
                <path d="M505 309.500 500 307" stroke="#4c4" stroke-width=".8"/>
                <circle cx="503" cy="299" r="1.300" fill="#e33"/>
                <circle cx="495" cy="314" r="1.300" fill="#3de"/>
                <circle cx="500" cy="307" r="1.200" fill="#3c5"/>
            </svg>

            <!-- In-graphics toolbar -->
            <div class="absolute top-[3px] left-1/2 -translate-x-1/2 h-[15px] flex items-center gap-1 px-[3px] bg-[#fbfbfc] border border-[#c9cccf]">
                <button aria-label="Refit"><svg class="size-[9px]"><use href="#i-refit"/></svg></button>
                <button aria-label="Zoom in"><svg class="size-[9px]"><use href="#i-zoomin"/></svg></button>
                <button aria-label="Zoom out"><svg class="size-[9px]"><use href="#i-zoomout"/></svg></button>
                <button aria-label="Repaint"><svg class="size-[9px]"><use href="#i-repaint"/></svg></button>
                <button aria-label="Display style"><svg class="size-[9px]"><use href="#i-shade"/></svg></button>
                <button aria-label="Saved orientations"><svg class="size-[9px]"><use href="#i-saved"/></svg></button>
                <button aria-label="View manager"><svg class="size-[9px]"><use href="#i-viewmgr"/></svg></button>
                <button aria-label="Section"><svg class="size-[9px]"><use href="#i-box"/></svg></button>
                <button aria-label="Appearance"><svg class="size-[9px]"><use href="#i-appear"/></svg></button>
                <button aria-label="Perspective"><svg class="size-[9px]"><use href="#i-persp"/></svg></button>
                <button aria-label="Datum display"><svg class="size-[9px]"><use href="#i-datum"/></svg></button>
                <button aria-label="Plane display"><svg class="size-[9px]"><use href="#i-dplane"/></svg></button>
                <button aria-label="Axis display"><svg class="size-[9px]"><use href="#i-daxis"/></svg></button>
                <button aria-label="Point display"><svg class="size-[9px]"><use href="#i-dpoint"/></svg></button>
                <button aria-label="Csys display"><svg class="size-[9px]"><use href="#i-dcsys"/></svg></button>
                <button aria-label="Spin center" class="bg-[#d9dbdd] outline outline-[#aaa]"><svg class="size-[9px]"><use href="#i-spin"/></svg></button>
                <button aria-label="Annotation display"><svg class="size-[9px]"><use href="#i-annot"/></svg></button>
                <button aria-label="Simulation display"><svg class="size-[9px]"><use href="#i-sim"/></svg></button>
                <button aria-label="Mesh"><svg class="size-[9px]"><use href="#i-tri"/></svg></button>
                <button aria-label="Pause"><svg class="size-[9px]"><use href="#i-pause"/></svg></button>
                <button aria-label="Exit"><svg class="size-[9px]"><use href="#i-exit"/></svg></button>
            </div>
            <p class="absolute left-1.5 bottom-[46px] font-['Roboto'] text-[7px] text-[#999ba0]">Insert Mode</p>
        </section>
    </main>

    <!-- Status bar -->
    <footer class="h-4 shrink-0 flex items-center pl-1 pr-2 border-t border-[#cfd1d3]">
        <button class="size-[11px] flex items-center justify-center bg-[#dcdcdc] border border-[#b5b5b5]" aria-label="Show navigator"><svg class="size-2"><use href="#i-navtree"/></svg></button>
        <button class="ml-[3px]" aria-label="Show browser"><svg class="size-[9px]"><use href="#i-browser"/></svg></button>
        <button class="ml-1" aria-label="Full screen"><svg class="size-[9px]"><use href="#i-panel"/></svg></button>
        <span class="ml-[5px] h-2.5 w-px bg-[#ccc]"></span>
        <span class="flex-1"></span>
        <span class="h-3 w-px bg-[#ddd]"></span>
        <button class="ml-px mr-[13px]" aria-label="Regeneration status"><svg class="size-2"><use href="#i-status"/></svg></button>
        <span class="h-3 w-px bg-[#ddd]"></span>
        <button class="ml-[3px] h-3 flex items-center gap-[3px] px-0.5 border border-[#d5d7d9]" aria-label="Find"><svg class="size-[9px]"><use href="#i-find"/></svg><svg class="size-1"><use href="#i-down"/></svg></button>
        <div class="relative ml-[46px]">
            <select aria-label="Selection filter" class="block w-[83px] h-3 appearance-none border border-[#b9bcbf] bg-[#f9f9f9] pl-1">
                <option>Geometry</option>
            </select>
            <span class="absolute right-px top-px h-2.5 w-[7px] flex items-center justify-center border-l border-[#c5c8ca] pointer-events-none"><svg class="size-1"><use href="#i-down"/></svg></span>
        </div>
    </footer>
</body>
</html>
